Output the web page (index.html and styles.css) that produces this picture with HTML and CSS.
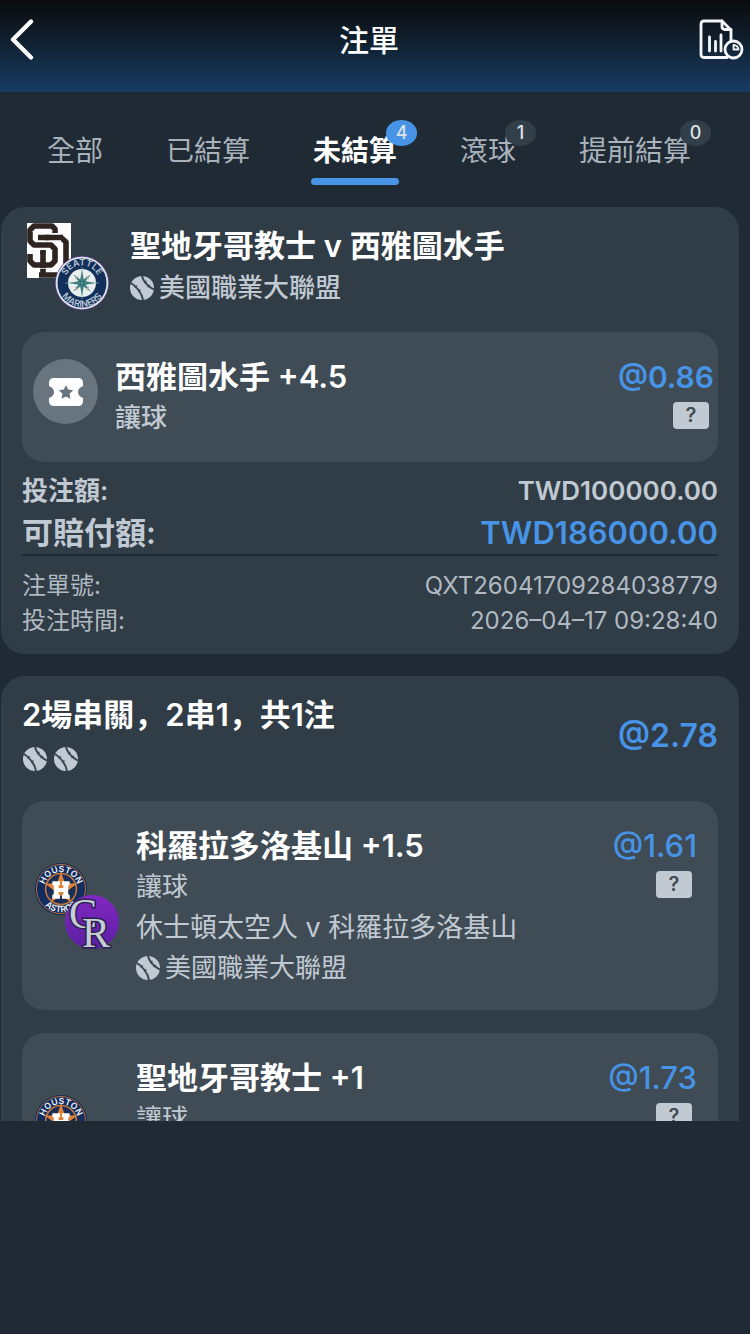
FILE: index.html
```html
<!DOCTYPE html>
<html lang="zh-Hant">
<head>
<meta charset="utf-8">
<meta name="viewport" content="width=device-width, initial-scale=1">
<title>注單</title>
<link rel="stylesheet" href="styles.css">
</head>
<body>
<svg class="defs" aria-hidden="true">
  <defs>
    <linearGradient id="rockies-bg" x1="0" y1="0" x2="0" y2="1">
      <stop offset="0" stop-color="#8327c4"/>
      <stop offset="1" stop-color="#5a1fa0"/>
    </linearGradient>
    <path id="arc-top" d="M9.500 27a17.500 17.500 0 0 1 35 0"/>
    <path id="arc-bottom" d="M3 27a24 24 0 0 0 48 0"/>
    <symbol id="ball" viewBox="0 0 24 24">
      <circle cx="12" cy="12" r="12" fill="#c1c9d3"/>
      <path d="M1 7C6 10 12 17 13 24M12 0C13 5 18 11 24 13.500" fill="none" stroke="#3b4750" stroke-width="2"/>
      <path d="M4.500 11.500l2.500-2M8 15.500l2.500-2M14 7l2.500-2M17.500 11l2.500-2" stroke="#3b4750" stroke-width="1.200"/>
    </symbol>
    <symbol id="padres" viewBox="0 0 44 55">
      <path d="M0 0h44v55H0z" fill="#fff"/>
      <g fill="none" stroke-linejoin="round">
        <path d="M11 14.500H34L39 19V46L33 52H12M16 27V52" stroke="#2f241f" stroke-width="5.600"/>
        <path d="M28 10V6L25 3H7L3 7V18L7 22H24L28 26V38L24 42H7L3 38V31" stroke="#fff" stroke-width="7.600"/>
        <path d="M28 10V6L25 3H7L3 7V18L7 22H24L28 26V38L24 42H7L3 38V31" stroke="#2f241f" stroke-width="5.600"/>
        <path d="M22 14.500H34M16 31V38" stroke="#fff" stroke-width="7.600"/>
        <path d="M18 14.500H36M16 28V45" stroke="#2f241f" stroke-width="5.600"/>
      </g>
    </symbol>
    <symbol id="mariners" viewBox="0 0 54 54">
      <circle cx="27" cy="27" r="27" fill="#6b4a9c"/>
      <circle cx="27" cy="27" r="26.300" fill="#dfe6ea"/>
      <circle cx="27" cy="27" r="24.500" fill="#12305b"/>
      <circle cx="27" cy="27" r="14" fill="#e9eeee"/>
      <path d="M27 14l2 11 11 2-11 2-2 11-2-11-11-2 11-2z" fill="#1c6468"/>
      <path d="M18 18l8 6-2 2zM36 18l-8 6 2 2zM18 36l8-6-2-2zM36 36l-8-6 2-2z" fill="#3b8282"/>
      <path d="M20 23l3-3M31 20l3 3M20 31l3 3M34 31l-3 3" stroke="#d7a1a6"/>
      <path d="M10 27h34M27 11v32" stroke="#7da7aa" stroke-width=".8"/>
      <text class="ring-text ring-pale"><textPath href="#arc-top" startOffset="50%">SEATTLE</textPath></text>
      <text class="ring-text ring-pale"><textPath href="#arc-bottom" startOffset="50%">MARINERS</textPath></text>
    </symbol>
    <symbol id="astros" viewBox="0 0 54 54">
      <circle cx="27" cy="27" r="27" fill="#15294f"/>
      <circle cx="27" cy="27" r="25.500" fill="#132d5e" stroke="#b9703f" stroke-width="1"/>
      <circle cx="27" cy="27" r="16" fill="#1a2f55" stroke="#c4773b" stroke-width="1.600"/>
      <path d="M27 9l4.200 12.200H44l-10.300 7.600 3.900 12.200L27 33.600 16.400 41l3.900-12.200L10 21.200h12.800z" fill="#dd8238"/>
      <path d="M18 19h8v4h-1.500v3h5v-3H28v-4h8v4h-1.500v10H36v4h-8v-4h1.500v-3h-5v3H26v4h-8v-4h1.500V23H18z" fill="#fff"/>
      <text class="ring-text ring-white"><textPath href="#arc-top" startOffset="50%">HOUSTON</textPath></text>
      <text class="ring-text ring-white"><textPath href="#arc-bottom" startOffset="50%">ASTROS</textPath></text>
    </symbol>
    <symbol id="rockies" viewBox="0 0 54 54">
      <circle cx="27" cy="27" r="27" fill="url(#rockies-bg)"/>
      <text class="rockies-letter" x="4" y="33">C</text>
      <text class="rockies-letter" x="17" y="52">R</text>
    </symbol>
  </defs>
</svg>

<header class="topbar">
  <button class="icon-button" type="button" aria-label="返回">
    <svg width="24" height="42" viewBox="0 0 24 42" fill="none" stroke="#fff" stroke-width="4.400" stroke-linecap="round" stroke-linejoin="round"><path d="M21 2.500L3 20.500l18 18"/></svg>
  </button>
  <h1 class="topbar-title">注單</h1>
  <button class="icon-button report-button" type="button" aria-label="報表">
    <svg width="46" height="42" viewBox="0 0 46 42" fill="none" stroke="#f4f6f8" stroke-width="2.800" stroke-linecap="round" stroke-linejoin="round">
      <path d="M29 38.500H6q-3 0-3-3V5q0-3 3-3h18l9 9v10"/>
      <path d="M24 2v5.500q0 3 3 3h6"/>
      <path d="M11.500 18v14M17.500 22.500v9.500M23 16v16"/>
      <circle cx="35.500" cy="30.500" r="8.500"/>
      <path d="M35.500 30.500V26a5 5 0 0 1 5 4.500z" stroke-width="1.800"/>
    </svg>
  </button>
</header>

<nav class="tabs">
  <button class="tab" type="button">全部</button>
  <button class="tab" type="button">已結算</button>
  <button class="tab tab-active" type="button" aria-current="page">未結算<span class="badge badge-active">4</span></button>
  <button class="tab" type="button">滾球<span class="badge">1</span></button>
  <button class="tab" type="button">提前結算<span class="badge">0</span></button>
</nav>

<main class="list">
  <article class="card">
    <div class="match">
      <div class="logos logos-single">
        <svg class="logo-square" role="img" aria-label="聖地牙哥教士"><use href="#padres"/></svg>
        <svg class="logo-front" role="img" aria-label="西雅圖水手"><use href="#mariners"/></svg>
      </div>
      <div>
        <h2 class="title">聖地牙哥教士 v 西雅圖水手</h2>
        <p class="league league-strong"><svg class="ball" aria-hidden="true"><use href="#ball"/></svg>美國職業大聯盟</p>
      </div>
    </div>
    <section class="pick pick-single">
      <span class="ticket">
        <svg width="34" height="28" viewBox="0 0 34 28" aria-hidden="true">
          <path d="M5 0h24q5 0 5 5v3q-5 2-5 6t5 6v3q0 5-5 5H5q-5 0-5-5v-3q5-2 5-6T0 8V5q0-5 5-5z" fill="#fff"/>
          <path d="M17 7l2.200 4.600 5 .7-3.600 3.500.9 5-4.500-2.400-4.500 2.400.9-5-3.600-3.500 5-.7z" fill="#69757e"/>
        </svg>
      </span>
      <div class="pick-body">
        <h3 class="title">西雅圖水手 +4.5</h3>
        <p class="market market-strong">讓球</p>
      </div>
      <div class="price">
        <span class="odds odds-single">@0.86</span>
        <button class="help" type="button" aria-label="說明">?</button>
      </div>
    </section>
    <dl class="totals">
      <div class="row stake"><dt>投注額:</dt><dd>TWD100000.00</dd></div>
      <div class="row payout"><dt>可賠付額:</dt><dd>TWD186000.00</dd></div>
    </dl>
    <dl class="meta">
      <div class="row"><dt>注單號:</dt><dd>QXT26041709284038779</dd></div>
      <div class="row"><dt>投注時間:</dt><dd>2026–04–17 09:28:40</dd></div>
    </dl>
  </article>

  <article class="card">
    <div class="combo">
      <div>
        <h2 class="title combo-title" lang="zh-Hans">2場串關，2串1，共1注</h2>
        <div class="balls">
          <svg class="ball" aria-hidden="true"><use href="#ball"/></svg>
          <svg class="ball" aria-hidden="true"><use href="#ball"/></svg>
        </div>
      </div>
      <span class="odds odds-combo">@2.78</span>
    </div>
    <section class="pick pick-leg">
      <div class="logos">
        <svg class="logo-back" role="img" aria-label="休士頓太空人"><use href="#astros"/></svg>
        <svg class="logo-front" role="img" aria-label="科羅拉多洛基山"><use href="#rockies"/></svg>
      </div>
      <div class="pick-body">
        <h3 class="title">科羅拉多洛基山 +1.5</h3>
        <p class="market">讓球</p>
        <p class="teams">休士頓太空人 v 科羅拉多洛基山</p>
        <p class="league"><svg class="ball" aria-hidden="true"><use href="#ball"/></svg>美國職業大聯盟</p>
      </div>
      <div class="price">
        <span class="odds odds-leg">@1.61</span>
        <button class="help" type="button" aria-label="說明">?</button>
      </div>
    </section>
    <section class="pick pick-leg">
      <div class="logos">
        <svg class="logo-back" role="img" aria-label="休士頓太空人"><use href="#astros"/></svg>
      </div>
      <div class="pick-body">
        <h3 class="title">聖地牙哥教士 +1</h3>
        <p class="market">讓球</p>
      </div>
      <div class="price">
        <span class="odds odds-leg">@1.73</span>
        <button class="help" type="button" aria-label="說明">?</button>
      </div>
    </section>
  </article>
</main>
</body>
</html>
```
FILE: styles.css
```css
* {
  box-sizing: border-box;
}

body {
  display: flex;
  flex-direction: column;
  height: 100vh;
  margin: 0;
  padding-bottom: 213px;
  background: #1f2a35;
  color: #c1c9d3;
  font-family: Inter, "Noto Sans CJK TC", sans-serif;
  font-size: 26px;
}

h1, h2, h3, p, dl, dd {
  margin: 0;
}

button {
  margin: 0;
  padding: 0;
  border: 0;
  background: none;
  color: inherit;
  font: inherit;
}

svg {
  display: block;
}

.defs {
  position: absolute;
  width: 0;
  height: 0;
}

.topbar {
  display: grid;
  grid-template-columns: 48px 1fr 60px;
  align-items: center;
  flex: none;
  height: 92px;
  padding-bottom: 12px;
  background: linear-gradient(#0b0b0d, #10202f 45%, #183c66);
}

.icon-button {
  padding-left: 10px;
}

.report-button {
  padding-left: 8px;
}

.topbar-title {
  color: #fff;
  font-size: 30px;
  font-weight: 500;
  line-height: 40px;
  text-align: center;
}

.tabs {
  display: flex;
  flex: none;
  gap: 63px;
  height: 115px;
  padding: 36px 0 0 47px;
}

.tab {
  position: relative;
  flex: none;
  height: 57px;
  padding-bottom: 10px;
  color: #a9b2bb;
  font-size: 28px;
  line-height: 47px;
}

.tab-active {
  color: #fff;
  font-weight: 600;
}

.tab-active::after {
  position: absolute;
  right: -2px;
  bottom: 0;
  left: -2px;
  height: 7px;
  border-radius: 4px;
  background: #4793e5;
  content: "";
}

.badge {
  position: absolute;
  top: -8px;
  right: -20px;
  width: 31px;
  height: 26px;
  border-radius: 16px / 13px;
  background: #323e48;
  color: #dde1e5;
  font-size: 18px;
  font-weight: 500;
  line-height: 26px;
  text-align: center;
}

.badge-active {
  background: #4793e5;
}

.list {
  display: flex;
  flex: 1;
  flex-direction: column;
  gap: 22px;
  min-height: 0;
  padding: 0 11px 0 1px;
  overflow-y: auto;
  scrollbar-width: none;
}

.card {
  flex: none;
  padding: 16px 21px;
  border-radius: 24px;
  background: #303c46;
}

.match {
  display: flex;
  gap: 21px;
  padding-left: 5px;
}

.logos {
  display: grid;
  flex: none;
  grid-template-columns: 30px 54px;
  grid-template-rows: 33px 54px;
}

.logos-single {
  grid-template-columns: 28px 54px;
}

.logo-square {
  grid-area: 1 / 1 / 3 / 3;
  width: 44px;
  height: 55px;
}

.logo-back {
  grid-area: 1 / 1 / 3 / 3;
  width: 52px;
  height: 54px;
}

.logo-front {
  grid-area: 2 / 2;
  z-index: 1;
  width: 54px;
  height: 54px;
}

.ring-text {
  font-family: Inter, sans-serif;
  font-size: 9px;
  font-weight: 600;
  text-anchor: middle;
}

.ring-pale {
  fill: #b9c6d3;
}

.ring-white {
  fill: #eef1f5;
}

.rockies-letter {
  fill: #c8ccd4;
  stroke: #2a2250;
  stroke-width: 3px;
  paint-order: stroke;
  font-family: "Liberation Serif", serif;
  font-size: 42px;
  font-weight: 400;
}

.title {
  color: #fff;
  font-size: 31px;
  font-weight: 600;
  line-height: 46px;
}

.league {
  display: flex;
  align-items: center;
  gap: 5px;
  line-height: 38px;
}

.league-strong,
.market-strong {
  font-weight: 500;
}

.ball {
  flex: none;
  width: 24px;
  height: 24px;
}

.pick {
  display: flex;
  border-radius: 22px;
  background: #404c55;
}

.pick-single {
  gap: 17px;
  height: 130px;
  margin-top: 22px;
  padding: 22px 4px 0 11px;
}

.pick-leg {
  gap: 17px;
  height: 209px;
  padding: 22px 21px 0 13px;
}

.pick-leg + .pick-leg {
  margin-top: 23px;
}

.pick-leg .logos {
  grid-template-columns: 30px 54px;
  margin-top: 39px;
}

.ticket {
  display: flex;
  align-items: center;
  justify-content: center;
  width: 65px;
  height: 65px;
  margin-top: 5px;
  border-radius: 50%;
  background: #69757e;
}

.pick-body {
  flex: 1;
  min-width: 0;
}

.pick-leg .logos:has(.logo-back:only-child) {
  width: 84px;
}

.market {
  line-height: 36px;
}

.teams {
  padding-top: 2px;
  font-size: 27px;
  line-height: 42px;
}

.price {
  display: flex;
  flex: none;
  flex-direction: column;
  align-items: flex-end;
  gap: 2px;
}

.odds {
  color: #4793e5;
  font-weight: 600;
  line-height: 46px;
}

.odds-single {
  font-size: 30px;
}

.odds-combo {
  padding-top: 8px;
  font-size: 32px;
}

.odds-leg {
  font-size: 31px;
  font-weight: 500;
}

.help {
  width: 36px;
  height: 27px;
  margin-right: 5px;
  border-radius: 4px;
  background: #c1c9d3;
  color: #404c55;
  font-size: 20px;
  font-weight: 600;
  line-height: 27px;
}

.row {
  display: flex;
  justify-content: space-between;
}

.totals {
  padding-top: 9px;
  border-bottom: 2px solid #1f2a35;
  font-weight: 600;
}

.stake {
  line-height: 40px;
}

.payout {
  font-size: 31px;
  line-height: 43px;
}

.payout dd {
  color: #4793e5;
}

.meta {
  padding-top: 12px;
  color: #b0b9c2;
  font-size: 24px;
  line-height: 35px;
}

.combo {
  display: flex;
  align-items: center;
  justify-content: space-between;
  padding-bottom: 30px;
}

.combo-title {
  font-family: Inter, "Noto Sans CJK SC", sans-serif;
}

.balls {
  display: flex;
  gap: 7px;
  padding: 9px 0 0 1px;
}
```
